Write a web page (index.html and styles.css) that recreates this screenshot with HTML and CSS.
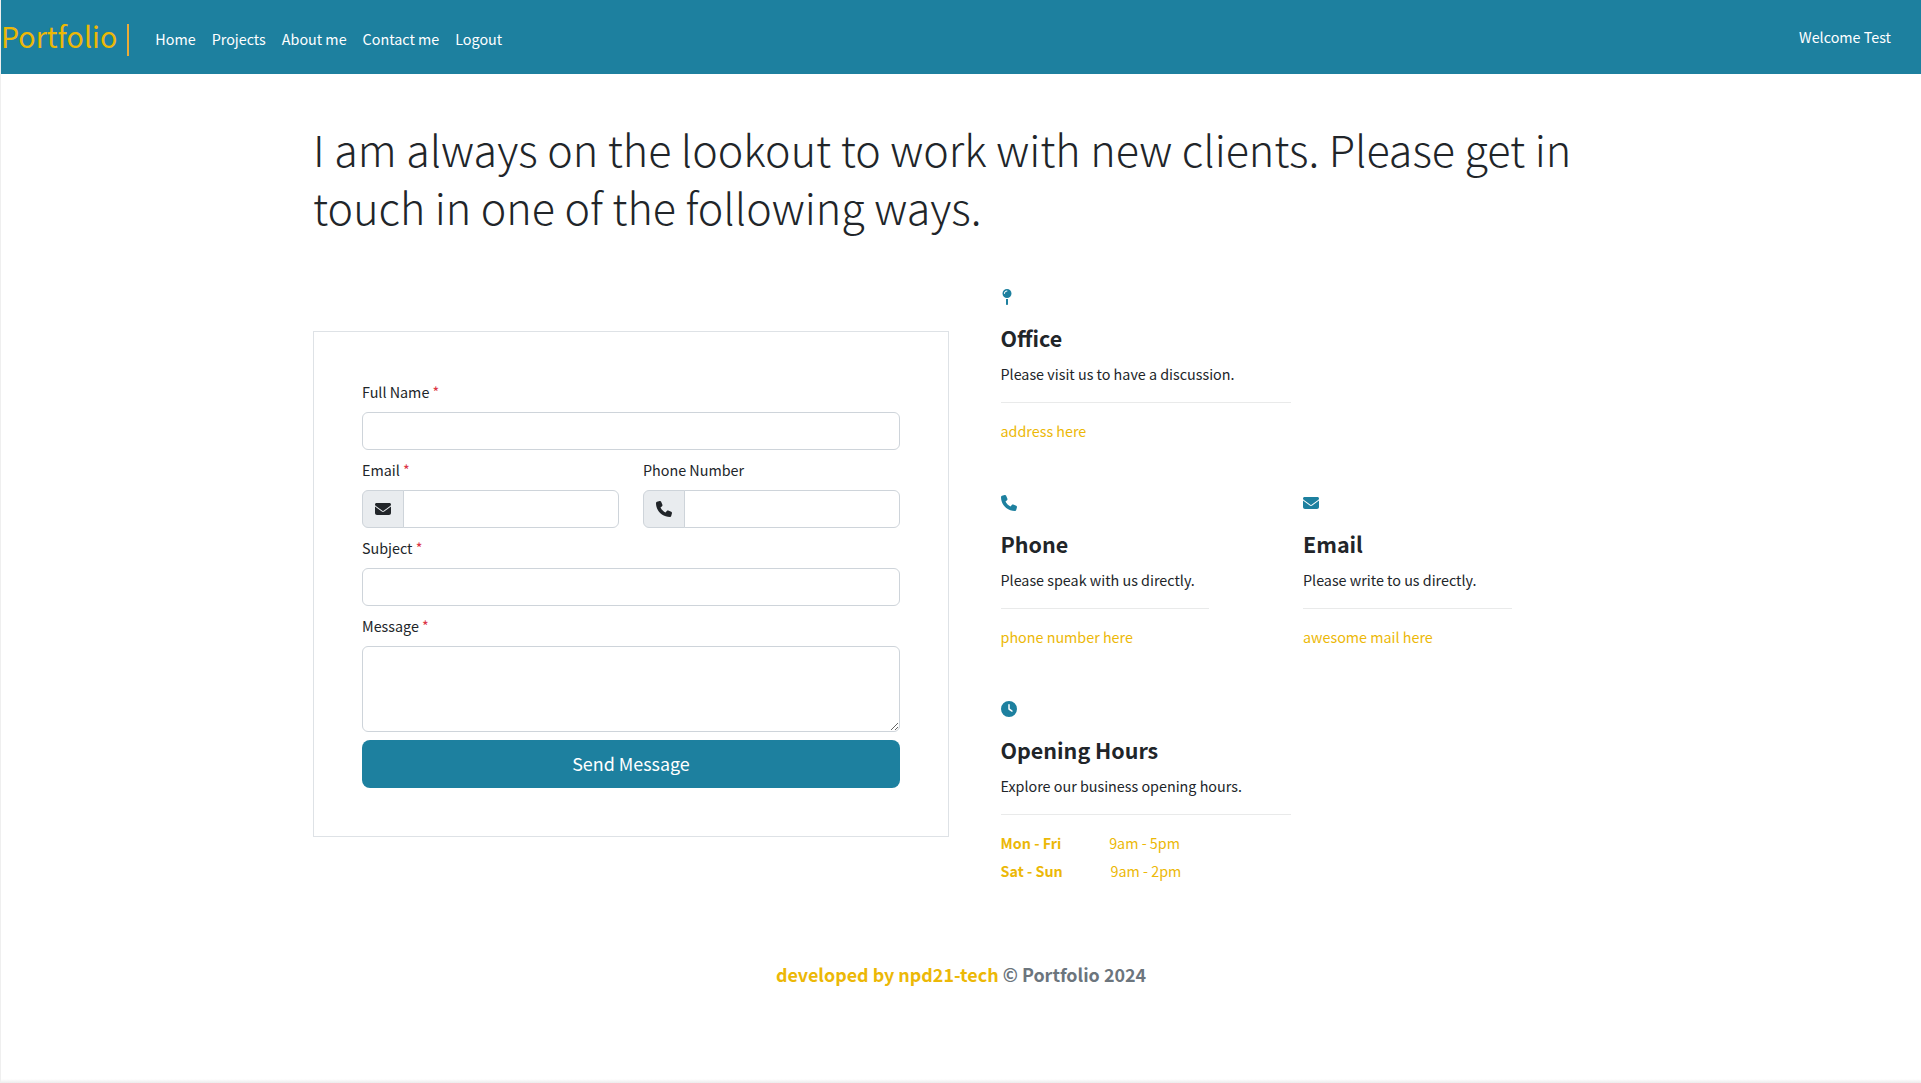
FILE: index.html
```html
<!DOCTYPE html>
<html lang="en">
<head>
<meta charset="utf-8">
<title>Portfolio</title>
<link rel="stylesheet" href="styles.css">
</head>
<body>
<svg class="sprite" aria-hidden="true">
  <symbol id="fa-envelope" viewBox="0 0 512 512"><path d="M48 64C21.500 64 0 85.500 0 112c0 15.100 7.100 29.300 19.200 38.400L236.800 313.600c11.400 8.500 27 8.500 38.400 0L492.800 150.400c12.100-9.100 19.200-23.300 19.200-38.400c0-26.500-21.500-48-48-48H48zM0 176V384c0 35.300 28.700 64 64 64H448c35.300 0 64-28.700 64-64V176L294.400 339.200c-22.800 17.100-54 17.100-76.800 0L0 176z"/></symbol>
  <symbol id="fa-phone" viewBox="0 0 512 512"><path d="M164.900 24.600c-7.700-18.600-28-28.500-47.400-23.200l-88 24C12.100 30.200 0 46 0 64C0 311.400 200.600 512 448 512c18 0 33.800-12.100 38.600-29.500l24-88c5.300-19.400-4.600-39.700-23.200-47.400l-96-40c-16.300-6.800-35.200-2.100-46.300 11.600L304.700 368C234.300 334.700 177.300 277.700 144 207.300L193.300 167c13.700-11.200 18.400-30 11.600-46.300l-40-96z"/></symbol>
  <symbol id="fa-clock" viewBox="0 0 512 512"><path d="M256 0a256 256 0 1 1 0 512A256 256 0 1 1 256 0zM232 120V256c0 8 4 15.500 10.700 20l96 64c11 7.400 25.900 4.400 33.300-6.700s4.400-25.900-6.700-33.300L280 243.200V120c0-13.300-10.700-24-24-24s-24 10.700-24 24z"/></symbol>
  <symbol id="fa-pin" viewBox="0 0 320 512"><path d="M16 144a144 144 0 1 1 288 0A144 144 0 1 1 16 144zM160 80c8.800 0 16-7.200 16-16s-7.200-16-16-16c-53 0-96 43-96 96c0 8.800 7.200 16 16 16s16-7.200 16-16c0-35.300 28.700-64 64-64zM128 480V317.100c10.400 1.900 21.100 2.900 32 2.900s21.600-1 32-2.900V480c0 17.700-14.300 32-32 32s-32-14.300-32-32z"/></symbol>
</svg>
<div class="page">
  <nav class="navbar">
    <a class="brand">Portfolio</a>
    <ul class="nav-links">
      <li>Home</li><li>Projects</li><li>About me</li><li>Contact me</li><li>Logout</li>
    </ul>
    <span class="welcome">Welcome Test</span>
  </nav>
  <main class="container">
    <h1 class="title">I am always on the lookout to work with new clients. Please get in touch in one of the following ways.</h1>
    <div class="columns">
      <form class="card">
        <div class="field">
          <label for="fullname">Full Name <span class="required">*</span></label>
          <input id="fullname" class="control" type="text">
        </div>
        <div class="field-row">
          <div class="field">
            <label for="email">Email <span class="required">*</span></label>
            <div class="group">
              <span class="addon"><svg class="icon"><use href="#fa-envelope"/></svg></span>
              <input id="email" class="control" type="email">
            </div>
          </div>
          <div class="field">
            <label for="phone">Phone Number</label>
            <div class="group">
              <span class="addon"><svg class="icon"><use href="#fa-phone"/></svg></span>
              <input id="phone" class="control" type="tel">
            </div>
          </div>
        </div>
        <div class="field">
          <label for="subject">Subject <span class="required">*</span></label>
          <input id="subject" class="control" type="text">
        </div>
        <div class="field">
          <label for="message">Message <span class="required">*</span></label>
          <textarea id="message" class="control message" rows="3"></textarea>
        </div>
        <button class="send" type="button">Send Message</button>
      </form>
      <div class="contacts">
        <section class="contact">
          <div class="contact-icon"><svg class="icon pin"><use href="#fa-pin"/></svg></div>
          <h4>Office</h4>
          <p>Please visit us to have a discussion.</p>
          <hr>
          <a class="link">address here</a>
        </section>
        <div class="contact-pair">
          <section class="contact">
            <div class="contact-icon"><svg class="icon"><use href="#fa-phone"/></svg></div>
            <h4>Phone</h4>
            <p>Please speak with us directly.</p>
            <hr>
            <a class="link">phone number here</a>
          </section>
          <section class="contact">
            <div class="contact-icon"><svg class="icon"><use href="#fa-envelope"/></svg></div>
            <h4>Email</h4>
            <p>Please write to us directly.</p>
            <hr>
            <a class="link">awesome mail here</a>
          </section>
        </div>
        <section class="contact">
          <div class="contact-icon"><svg class="icon"><use href="#fa-clock"/></svg></div>
          <h4>Opening Hours</h4>
          <p>Explore our business opening hours.</p>
          <hr>
          <div class="hours"><strong>Mon - Fri</strong><span>9am - 5pm</span></div>
          <div class="hours"><strong>Sat - Sun</strong><span>9am - 2pm</span></div>
        </section>
      </div>
    </div>
  </main>
  <footer class="footer"><span class="credit">developed by npd21-tech</span> © Portfolio 2024</footer>
</div>
</body>
</html>
```
FILE: styles.css
```css
* { box-sizing: border-box; }

body {
  margin: 0;
  color: #212529;
  background: #fff;
  font: 400 14.33px/24px "Noto Sans CJK SC", "Noto Sans CJK JP", sans-serif;
}

.sprite { display: none; }

.page {
  display: flex;
  flex-direction: column;
  height: 1083px;
  border-left: 1px solid #efefef;
  background: linear-gradient(#fff, #ececec) bottom / 100% 4px no-repeat;
}

.navbar {
  display: flex;
  align-items: center;
  height: 74px;
  padding-right: 30px;
  background: #1d809f;
  color: #fff;
}

.brand {
  height: 32px;
  padding-right: 10px;
  border-right: 2px solid #ecab37;
  margin-top: 6px;
  color: #ecb807;
  font-size: 28.65px;
  line-height: 23px;
}

.nav-links {
  display: flex;
  gap: 16px;
  margin: 4px 0 0 26px;
  padding: 0;
  list-style: none;
}

.welcome { margin-left: auto; }

.container {
  width: 1296px;
  margin: 46px auto 0;
}

.title {
  margin: 0;
  font-size: 43.03px;
  font-weight: 300;
  line-height: 57.6px;
}

.columns {
  display: grid;
  grid-template-columns: 636px 1fr;
  gap: 51.5px;
  align-items: start;
  margin-top: 50px;
}

.card {
  display: grid;
  gap: 8px;
  margin-top: 46px;
  padding: 48px;
  border: 1px solid #dee2e6;
}

.field {
  display: flex;
  flex-direction: column;
  gap: 8px;
}

.field-row {
  display: grid;
  grid-template-columns: 1fr 1fr;
  gap: 24px;
}

.required { color: #dc3545; }

.control {
  width: 100%;
  height: 38px;
  padding: 6px 12px;
  border: 1px solid #ced4da;
  border-radius: 6px;
  background: #fff;
  font: inherit;
}

.message {
  height: 86px;
  resize: vertical;
}

.group { display: flex; }

.group .control {
  flex: 1;
  min-width: 0;
  border-radius: 0 6px 6px 0;
}

.addon {
  display: flex;
  align-items: center;
  height: 38px;
  margin-right: -1px;
  padding: 0 12px;
  border: 1px solid #ced4da;
  border-radius: 6px 0 0 6px;
  background: #e9ecef;
}

.icon {
  display: block;
  width: 16px;
  height: 16px;
  fill: currentColor;
}

.pin {
  width: 10px;
  margin-left: 1px;
}

.send {
  height: 48px;
  padding: 0 0 2px;
  border: 0;
  border-radius: 8px;
  background: #1d809f;
  color: #fff;
  font: inherit;
  font-size: 17.9px;
  line-height: 30px;
}

.contacts {
  display: grid;
  gap: 48px;
}

.contact { width: 290px; }

.contact-pair {
  display: grid;
  grid-template-columns: 208px 209px;
  gap: 94.5px;
}

.contact-pair .contact { width: auto; }

.contact-icon {
  height: 24px;
  padding-top: 4px;
  margin-bottom: 15px;
  color: #1d809f;
}

h4 {
  margin: 0 0 9px;
  font-size: 21.48px;
  font-weight: 700;
  line-height: 28.8px;
}

p { margin: 0 0 16px; }

hr {
  margin: 0 0 16px;
  border: 0;
  border-top: 1px solid #e9eaea;
}

.link {
  display: block;
  color: #ecb807;
}

.hours {
  display: flex;
  gap: 47.8px;
  margin-bottom: 4px;
  color: #ecb807;
}

.footer {
  margin-top: 72px;
  color: #6c757d;
  font-size: 17.9px;
  font-weight: 700;
  line-height: 30px;
  text-align: center;
}

.credit { color: #ecb807; }
```
